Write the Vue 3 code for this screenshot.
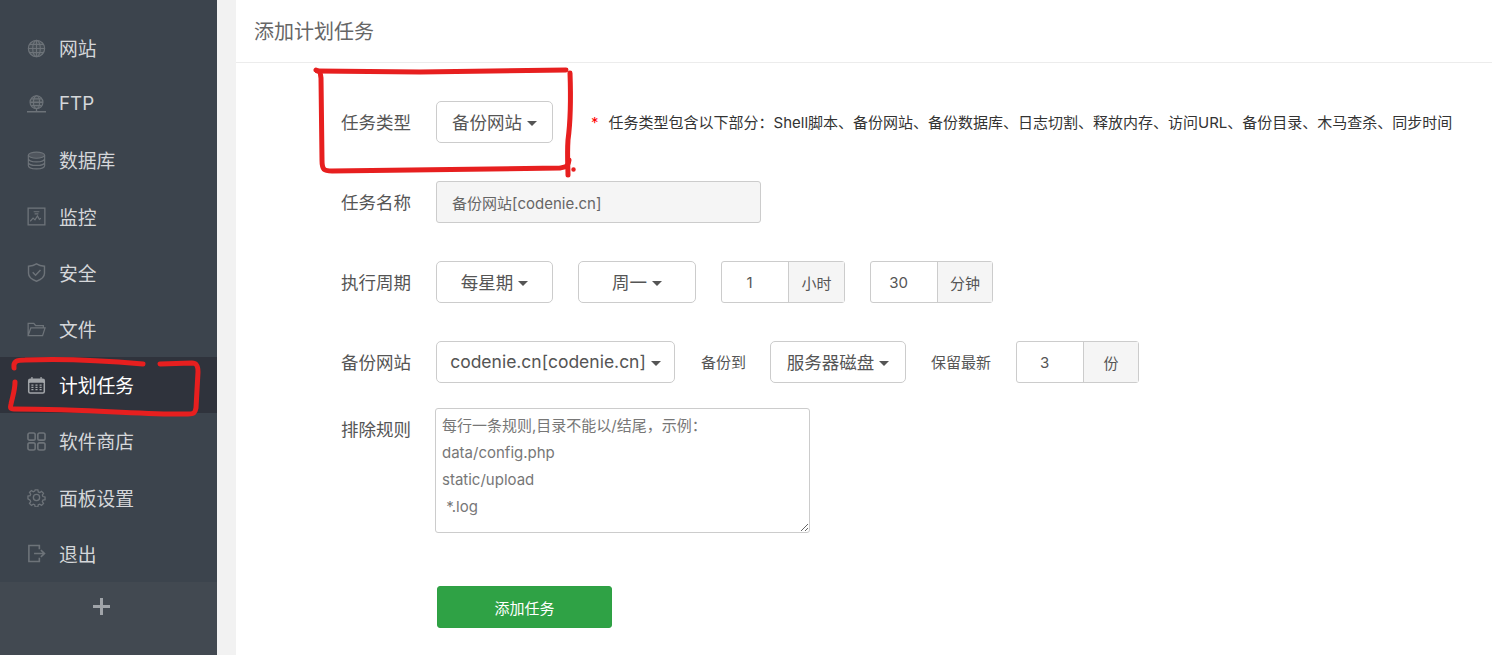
<script setup>
const nav = [
  { k: 'globe', t: '网站' }, { k: 'ftp', t: 'FTP' }, { k: 'db', t: '数据库' }, { k: 'mon', t: '监控' },
  { k: 'shield', t: '安全' }, { k: 'folder', t: '文件' }, { k: 'cal', t: '计划任务', on: true },
  { k: 'apps', t: '软件商店' }, { k: 'gear', t: '面板设置' }, { k: 'exit', t: '退出' }
]
</script>

<template>
  <div class="page">
    <aside class="side">
      <nav class="menu">
        <a v-for="n in nav" :key="n.t" class="item" :class="{ on: n.on }">
          <svg class="ico" viewBox="0 0 20 20" fill="none" stroke="currentColor" stroke-width="1.2">
            <template v-if="n.k === 'globe'">
              <circle cx="10" cy="10" r="8.6" fill="currentColor" fill-opacity=".25"/>
              <ellipse cx="10" cy="10" rx="4" ry="8.6"/><path d="M10 1.4v17.2M1.4 10h17.2M2.6 5.6h14.8M2.6 14.4h14.8"/>
            </template>
            <template v-else-if="n.k === 'ftp'">
              <circle cx="10" cy="7.6" r="6.8" fill="currentColor" fill-opacity=".25"/>
              <ellipse cx="10" cy="7.6" rx="3.2" ry="6.8"/><path d="M3.2 7.6h13.6M4.4 4h11.2M4.4 11.2h11.2M10 14.4v3M0 17.6h20" stroke-width="1.4"/>
            </template>
            <template v-else-if="n.k === 'db'">
              <ellipse cx="10" cy="4.4" rx="8.6" ry="3.2" fill="currentColor" fill-opacity=".4"/>
              <path d="M1.4 4.4v11.2c0 1.8 3.9 3.2 8.6 3.2s8.6-1.4 8.6-3.2V4.4M1.4 8.2c0 1.8 3.9 3.2 8.6 3.2s8.6-1.4 8.6-3.2M1.4 12c0 1.8 3.9 3.2 8.6 3.2s8.6-1.4 8.6-3.2"/>
            </template>
            <template v-else-if="n.k === 'mon'">
              <rect x="1.2" y="1.2" width="17.6" height="17.6" stroke-width="1.4"/>
              <path d="M3.4 15l3-3.4 2 2 2.600-4.200 2 3.600 1.600-1.200M7 5h6M8 7.200h4"/>
            </template>
            <template v-else-if="n.k === 'shield'">
              <path d="M10 1C7.800 2.600 4.600 3.400 1.600 3.400v7.400C1.600 15 6.600 18 10 19.200c3.400-1.200 8.400-4.200 8.400-8.400V3.400C15.400 3.400 12.200 2.600 10 1z" stroke-width="1.500"/>
              <path d="M6 9.800l3 3 5.200-5.400" stroke-width="1.500"/>
            </template>
            <template v-else-if="n.k === 'folder'">
              <path d="M1.200 16.400V3.600h6l1.800 2.200h8.200v2.600M1.200 16.400h15.200l2.600-8H4z" stroke-width="1.300"/>
            </template>
            <template v-else-if="n.k === 'cal'">
              <rect x="1" y="2.600" width="18" height="16" rx="2.400" fill="currentColor" stroke="none"/>
              <path d="M5.200 1v3M14.800 1v3" stroke-width="1.400"/>
              <rect x="2.600" y="7" width="14.800" height="10" rx=".6" fill="#2f333c" stroke="none"/>
              <path d="M4.600 9.600h2.200M8.900 9.600h2.200M13.200 9.600h2.200M4.600 12h2.200M8.900 12h2.200M13.200 12h2.200M4.600 14.400h2.200M8.900 14.400h2.200M13.200 14.400h2.200" stroke-width="1.300"/>
            </template>
            <template v-else-if="n.k === 'apps'">
              <rect x="1" y="1" width="7.600" height="7.600" rx="1.800" stroke-width="1.700"/><rect x="11.400" y="1" width="7.600" height="7.600" rx="1.800" stroke-width="1.700"/>
              <rect x="1" y="11.400" width="7.600" height="7.600" rx="1.800" stroke-width="1.700"/><rect x="11.400" y="11.400" width="7.600" height="7.600" rx="1.800" stroke-width="1.700"/>
            </template>
            <template v-else-if="n.k === 'gear'">
              <path d="M8.400 1h3.200l.5 2.500 1.700.7 2.100-1.400 2.300 2.300-1.400 2.100.7 1.700 2.500.5v3.200l-2.500.5-.7 1.700 1.400 2.100-2.300 2.300-2.100-1.400-1.700.7-.5 2.400H8.400l-.5-2.400-1.700-.7-2.100 1.400-2.300-2.300 1.400-2.100-.7-1.700L0 11.600V8.400l2.500-.5.7-1.700-1.400-2.100 2.300-2.300 2.100 1.400 1.700-.7z" transform="translate(1 1) scale(.9)" stroke-width="1.500"/>
              <circle cx="10" cy="10" r="3.300" stroke-width="1.400"/>
            </template>
            <template v-else>
              <path d="M13 5.600V1.600H2v16.800h11v-4" stroke-width="1.700"/>
              <path d="M7.400 10h10.400M14.600 6.400L18.400 10l-3.800 3.600" stroke-width="1.700"/>
            </template>
          </svg>
          <span class="txt">{{ n.t }}</span>
        </a>
      </nav>
      <div class="plus">
        <svg width="17" height="17" viewBox="0 0 17 17"><path d="M0 8.500h17M8.500 0v17" stroke="#a0a4a9" stroke-width="3"/></svg>
      </div>
    </aside>

    <main class="main">
      <header class="head">添加计划任务</header>
      <form class="form">
        <div class="row">
          <label class="lab">任务类型</label>
          <button type="button" class="btn w117">备份网站<i class="caret"></i></button>
          <p class="hint"><b>*</b>任务类型包含以下部分：Shell脚本、备份网站、备份数据库、日志切割、释放内存、访问URL、备份目录、木马查杀、同步时间</p>
        </div>
        <div class="row">
          <label class="lab">任务名称</label>
          <input class="name" readonly value="备份网站[codenie.cn]" />
        </div>
        <div class="row">
          <label class="lab">执行周期</label>
          <button type="button" class="btn w117">每星期<i class="caret"></i></button>
          <button type="button" class="btn w118 g25">周一<i class="caret"></i></button>
          <div class="group g25"><span class="val">1</span><span class="unit u56">小时</span></div>
          <div class="group g25"><span class="val">30</span><span class="unit">分钟</span></div>
        </div>
        <div class="row">
          <label class="lab">备份网站</label>
          <button type="button" class="btn w239">codenie.cn[codenie.cn]<i class="caret"></i></button>
          <span class="small g26">备份到</span>
          <button type="button" class="btn w136 g24">服务器磁盘<i class="caret"></i></button>
          <span class="small g25">保留最新</span>
          <div class="group g25"><span class="val">3</span><span class="unit">份</span></div>
        </div>
        <div class="row area-row">
          <label class="lab top">排除规则</label>
          <textarea class="area" readonly>每行一条规则,目录不能以/结尾，示例：
data/config.php
static/upload
 *.log</textarea>
        </div>
        <button type="button" class="add">添加任务</button>
      </form>
    </main>

    <svg class="ink" width="1492" height="655" viewBox="0 0 1492 655" fill="none" stroke="#e71f1f" stroke-width="5" stroke-linecap="round" stroke-linejoin="round">
      <path d="M316 70C321 72 320 72 321 78L322 160C322 170 324 171 332 171L560 168C566 167 568 167 569 160"/>
      <path d="M317 71L420 72 566 70"/>
      <path d="M570 73C571 100 570 125 568 140 567 155 568 168 568 175"/>
      <circle cx="573.500" cy="169.500" r="1.500" fill="#e71f1f" stroke-width="1.500"/>
      <path d="M14 368C13 361 17 360 25 360 70 358 110 361 143 364"/>
      <path d="M160 364L192 363C197 363 198 366 198 372L196 408C195 413 194 414 188 414 150 415 90 409 14 409 10 409 10 408 11 404 13 395 15 390 15 382"/>
    </svg>
  </div>
</template>

<style>
html, body { margin: 0; background: #fff; overflow: hidden; }
</style>

<style scoped>
.page {
  position: relative;
  display: flex;
  width: 1492px;
  height: 655px;
  overflow: hidden;
  background: #fff;
  font-family: "Inter", "Noto Sans CJK SC", sans-serif;
}
.side {
  width: 217px;
  flex: none;
  display: flex;
  flex-direction: column;
  background: #3c444d;
  box-sizing: border-box;
  padding-top: 20px;
}
.menu { display: flex; flex-direction: column; }
.item {
  height: 56.2px;
  display: flex;
  align-items: center;
  gap: 13px;
  padding-left: 27px;
  color: #d5d7da;
  font-size: 18.75px;
}
.txt { margin-bottom: 1px; }
.ico { width: 19px; height: 19px; flex: none; color: #6d7379; }
.item.on { background: #2f333c; color: #fff; }
.item.on .ico { color: #a2a5a9; }
.plus {
  flex: 1;
  background: #424951;
  display: flex;
  justify-content: center;
  padding: 16px 14px 0 0;
}
.plus svg { display: block; }
.main {
  flex: 1;
  margin-left: 19px;
  min-width: 0;
  position: relative;
}
.main::before {
  content: "";
  position: absolute;
  left: -19px;
  top: 0;
  width: 19px;
  height: 100%;
  background: #f2f2f2;
}
.head {
  height: 63px;
  box-sizing: border-box;
  border-bottom: 1px solid #ececec;
  padding: 1px 0 0 18px;
  font-size: 20px;
  line-height: 62px;
  color: #666;
}
.form { padding: 38px 0 0 105px; display: flex; flex-direction: column; }
.row { display: flex; align-items: center; height: 42px; margin-bottom: 38px; }
.lab {
  width: 95px;
  flex: none;
  font-size: 17.5px;
  color: #555;
  padding-bottom: 1px;
}
.btn {
  height: 42px;
  box-sizing: border-box;
  background: #fff;
  border: 1px solid #ccc;
  border-radius: 5px;
  padding: 0 0 2px;
  font: inherit;
  font-size: 17.5px;
  color: #555;
  display: flex;
  align-items: center;
  justify-content: center;
  flex: none;
}
.caret {
  width: 0;
  height: 0;
  margin-left: 5px;
  margin-top: 4px;
  border-top: 5px solid #555;
  border-left: 5px solid transparent;
  border-right: 5px solid transparent;
}
.w117 { width: 117px; }
.w118 { width: 118px; }
.w239 { width: 239px; }
.w136 { width: 136px; }
.g25 { margin-left: 25px; }
.g24 { margin-left: 24px; }
.g26 { margin-left: 26px; }
.hint {
  margin: 0 0 0 38px;
  padding-bottom: 1px;
  font-size: 15px;
  color: #333;
  white-space: nowrap;
}
.hint b { color: #f00; font-weight: 400; margin-right: 10px; }
.name {
  width: 325px;
  height: 42px;
  box-sizing: border-box;
  border: 1px solid #ccc;
  border-radius: 3px;
  background: #f5f5f5;
  padding: 0 15px;
  font: inherit;
  font-size: 15px;
  color: #666;
  outline: none;
}
.group {
  display: flex;
  height: 42px;
  box-sizing: border-box;
  border: 1px solid #ccc;
  border-radius: 3px;
  font-size: 15px;
  color: #555;
}
.val {
  display: flex;
  align-items: center;
  justify-content: center;
  width: 66px;
  padding: 0 11px 0 0;
  box-sizing: border-box;
}
.unit {
  display: flex;
  align-items: center;
  justify-content: center;
  width: 55px;
  background: #f5f5f5;
  border-left: 1px solid #ccc;
  box-sizing: border-box;
}
.u56 { width: 56px; }
.small { font-size: 15px; color: #555; padding-bottom: 1px; }
.area-row { height: 125px; align-items: flex-start; margin-top: -13px; margin-bottom: 53px; }
.top { padding: 8px 0 0; width: 94px; }
.area {
  width: 375px;
  height: 125px;
  box-sizing: border-box;
  border: 1px solid #ccc;
  border-radius: 3px;
  padding: 3px 6px;
  font: inherit;
  font-size: 15px;
  line-height: 27px;
  color: #777;
  outline: none;
  resize: both;
  overflow: hidden;
}
.add {
  width: 175px;
  height: 42px;
  margin-left: 96px;
  border: 1px solid #2ea043;
  border-radius: 3px;
  background: #2fa245;
  color: #fff;
  font: inherit;
  font-size: 15px;
  padding: 0;
}
.ink { position: absolute; left: 0; top: 0; pointer-events: none; }
</style>
